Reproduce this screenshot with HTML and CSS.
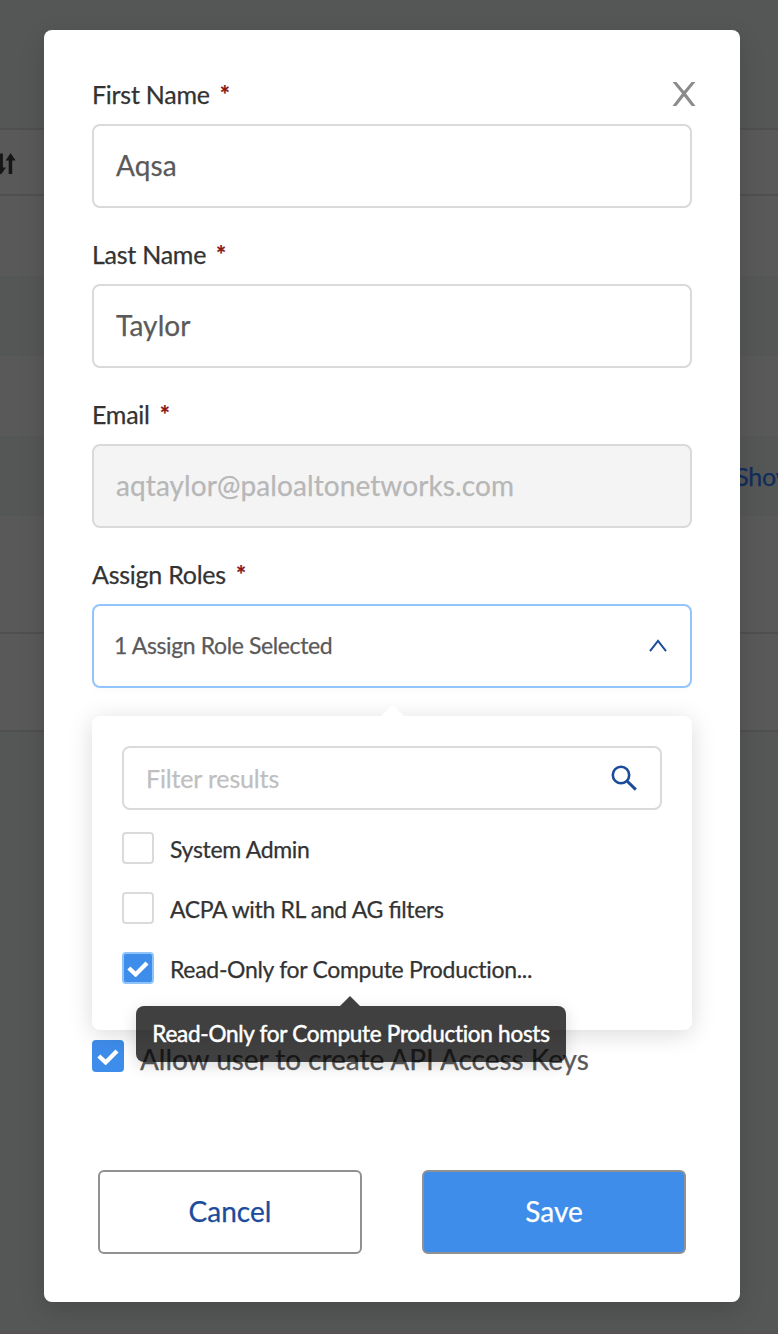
FILE: index.html
```html
<!DOCTYPE html>
<html lang="en">
<head>
<meta charset="utf-8">
<title>Edit User</title>
<link rel="stylesheet" href="styles.css">
</head>
<body>
<div class="page">
  <div class="backdrop">
    <div class="band band-top"></div>
    <div class="band band-head">
      <svg class="sort" width="16" height="24" viewBox="0 0 16 24"><path d="M0 1.500h2.900v14H6L1 22.500l-1-1zM8.700 22V8.500H5.600l5-7.500 5 7.500H12.200v13.500z" fill="#161616"/></svg>
    </div>
    <div class="band band-row"></div>
    <div class="band band-row alt"></div>
    <div class="band band-row"></div>
    <div class="band band-row alt link-row"><span class="show">Show</span></div>
    <div class="band band-tall"></div>
    <div class="band band-foot"></div>
    <div class="band band-rest"></div>
  </div>

  <form class="modal">
    <button class="close" type="button" aria-label="Close">
      <svg width="24" height="26" viewBox="0 0 24 26"><path d="M.6 1h3.800L12 10l7.600-9h3.800L14 12.600 23.500 25h-3.800L12 15.300 4.300 25H.5l9.500-12.400z" fill="#8b8b8b"/></svg>
    </button>
    <div class="field">
      <div class="label">First Name<span class="req">*</span></div>
      <div class="input"><span class="value">Aqsa</span></div>
    </div>
    <div class="field">
      <div class="label">Last Name<span class="req">*</span></div>
      <div class="input"><span class="value">Taylor</span></div>
    </div>
    <div class="field">
      <div class="label">Email<span class="req">*</span></div>
      <div class="input disabled"><span class="value">aqtaylor@paloaltonetworks.com</span></div>
    </div>
    <div class="field roles">
      <div class="label">Assign Roles<span class="req">*</span></div>
      <div class="input select"><span class="value">1 Assign Role Selected</span>
        <svg class="caret" width="18" height="13" viewBox="0 0 18 13"><path d="M1 12.200 9 1.800l8 10.400" fill="none" stroke="#1a4c9b" stroke-width="1.900"/></svg>
      </div>
      <div class="dropdown">
        <div class="filter"><span class="filter-text">Filter results</span>
          <svg width="28" height="28" viewBox="0 0 28 28"><circle cx="11" cy="11" r="8.200" fill="none" stroke="#1a4c9b" stroke-width="2.600"/><path d="m17 17 8.800 8.600" stroke="#1a4c9b" stroke-width="3"/></svg>
        </div>
        <div class="options">
          <div class="option"><span class="box"></span><span class="option-text">System Admin</span></div>
          <div class="option"><span class="box"></span><span class="option-text ligatures">ACPA with RL and AG filters</span></div>
          <div class="option"><span class="box checked focus"><svg width="22" height="18" viewBox="0 0 22 18"><path d="m1.800 9 6.800 6.400L20 4" fill="none" stroke="#fff" stroke-width="4.300"/></svg></span><span class="option-text">Read-Only for Compute Production...</span>
            <div class="tooltip">Read-Only for Compute Production hosts</div>
          </div>
        </div>
      </div>
    </div>
    <div class="allow"><span class="box checked"><svg width="22" height="18" viewBox="0 0 22 18"><path d="m1.800 9 6.800 6.400L20 4" fill="none" stroke="#fff" stroke-width="4.300"/></svg></span><span class="allow-text">Allow user to create API Access Keys</span></div>
    <div class="actions">
      <button class="btn" type="button">Cancel</button>
      <button class="btn primary" type="button">Save</button>
    </div>
  </form>
</div>
</body>
</html>
```

FILE: styles.css
```css
* { box-sizing: border-box; }
body { margin: 0; font-family: Lato, "Liberation Sans", sans-serif; -webkit-text-stroke: .25px currentColor; }
.page { position: relative; width: 778px; height: 1334px; overflow: hidden; padding: 30px 38px 32px 44px; }

/* dimmed table behind the dialog */
.backdrop { position: absolute; inset: 0; display: flex; flex-direction: column; background: #555756; }
.band { flex: none; background: #5a5959; }
.band-top { height: 130px; background: #555756; border-bottom: 2px solid #504f4f; }
.band-head { height: 66px; border-bottom: 2px solid #504f4f; padding-top: 22px; }
.sort { display: block; }
.band-row { height: 80px; }
.band.alt { background: #555756; }
.link-row { display: flex; justify-content: flex-end; align-items: center; }
.show { margin-right: -17px; font-size: 25px; letter-spacing: -.3px; line-height: 30px; color: #102d5b; }
.band-tall { height: 118px; border-bottom: 2px solid #504f4f; }
.band-foot { height: 98px; border-bottom: 2px solid #504f4f; }
.band-rest { flex: 1; background: #555756; border-bottom: 2px solid #595254; }

.modal { position: relative; width: 696px; height: 1272px; padding: 50px 48px 48px; background: #fff; border-radius: 8px; box-shadow: 0 8px 24px rgba(0, 0, 0, .15); display: flex; flex-direction: column; }
.close { position: absolute; top: 51px; right: 44px; padding: 0; border: 0; background: none; line-height: 0; }

.field { margin-bottom: 32px; }
.label { height: 30px; line-height: 29px; margin-bottom: 14px; font-size: 25px; letter-spacing: -.25px; color: #333; white-space: nowrap; }
.req { margin-left: 10px; color: #8b1414; font-size: 24px; font-weight: 700; line-height: 1; }
.input { height: 84px; padding: 0 22px; border: 2px solid #dadada; border-radius: 8px; display: flex; align-items: center; font-size: 28px; letter-spacing: .09px; color: #5a5a5a; }
.value { padding-bottom: 2px; }
.input.disabled { background: #f4f4f4; color: #b7b7b7; }
.roles { position: relative; margin-bottom: 0; }
.input.select { justify-content: space-between; border-color: #91c5fb; font-size: 23px; letter-spacing: -.38px; padding: 0 23px 0 20px; box-shadow: 0 4px 4px rgba(0, 0, 0, .015); }
.caret { margin-bottom: 1px; }

/* role picker */
.dropdown { position: absolute; z-index: 2; left: 0; top: 156px; width: 600px; height: 314px; padding: 30px; border-radius: 8px; background: #fff; box-shadow: 0 4px 24px rgba(0, 0, 0, .15); }
.dropdown::before { content: ""; position: absolute; left: 50%; top: -8px; width: 17px; height: 17px; margin-left: -8px; background: #fff; transform: rotate(45deg); }
.filter { height: 64px; padding: 0 22px; border: 2px solid #dadada; border-radius: 8px; display: flex; align-items: center; justify-content: space-between; font-size: 25px; letter-spacing: -.16px; color: #bfbfbf; }
.options { display: flex; flex-direction: column; gap: 28px; padding-top: 22px; }
.option { position: relative; height: 32px; display: flex; align-items: center; gap: 16px; }
.option-text { padding-top: 1px; font-size: 23px; letter-spacing: -.31px; line-height: 28px; color: #333; white-space: nowrap; }
.ligatures { letter-spacing: -.35px; font-feature-settings: "liga" 1; }
.box { flex: none; width: 32px; height: 32px; border: 2px solid #dadada; border-radius: 4px; display: flex; align-items: center; justify-content: center; background: #fff; }
.box.checked { background: #3e8dea; border-color: #3e8dea; }
.box.focus { border-color: #8fc4fb; }
.tooltip { position: absolute; left: 14px; top: 54px; width: 430px; height: 56px; border-radius: 8px; background: rgba(0, 0, 0, .75); color: #fff; font-size: 22.5px; letter-spacing: -.27px; line-height: 55px; text-align: center; white-space: nowrap; box-shadow: 0 4px 16px rgba(0, 0, 0, .15); -webkit-text-stroke-width: .5px; }
.tooltip::before { content: ""; position: absolute; left: 204px; top: -10px; border: 10px solid transparent; border-top: 0; border-bottom-color: #404040; }

.allow { display: flex; align-items: center; gap: 16px; height: 32px; margin-top: 352px; }
.allow-text { padding-top: 6px; font-size: 28px; letter-spacing: -.04px; line-height: 34px; color: #5a5a5a; white-space: nowrap; }
.actions { display: flex; justify-content: space-between; margin-top: auto; padding: 0 6px; }
.btn { width: 264px; height: 84px; padding: 0 0 2px; border: 2px solid #919191; border-radius: 6px; background: #fff; color: #1a4c9b; font: 28px Lato, sans-serif; -webkit-text-stroke: .25px currentColor; }
.btn.primary { background: #3e8dea; color: #fff; }
```
